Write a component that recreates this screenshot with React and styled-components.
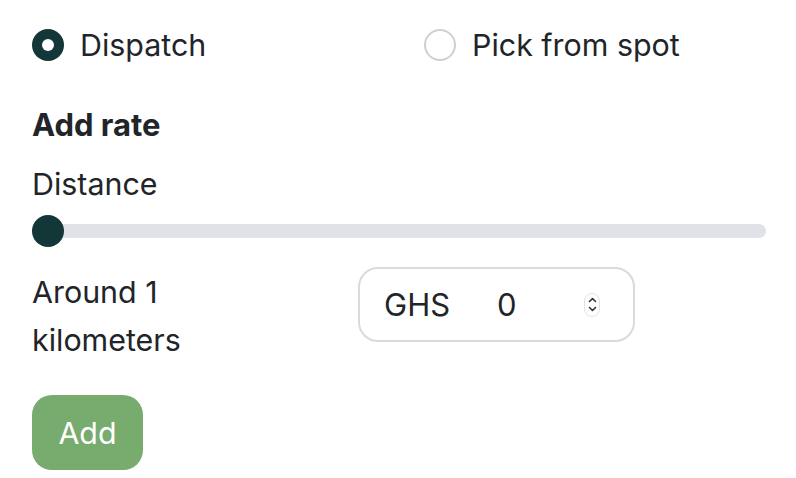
import React from "react";
import styled, { createGlobalStyle } from "styled-components";

const Global = createGlobalStyle`
  html, body { margin: 0; padding: 0; background: #fff; }
  body { font-family: Inter, "Liberation Sans", sans-serif; color: #212529; }
  * { box-sizing: border-box; }
`;

const Page = styled.div`
  padding: 21px 30px 0 32px;
  display: flex;
  flex-direction: column;
`;

const RadioRow = styled.div`
  display: grid;
  grid-template-columns: 392px 1fr;
  height: 48px;
  align-items: center;
`;

const RadioOption = styled.label`
  display: flex;
  align-items: center;
  gap: 16px;
  font-size: 30.4px;
  cursor: pointer;
`;

const RadioDot = styled.span`
  width: 32px;
  height: 32px;
  border-radius: 50%;
  flex: none;
  display: flex;
  align-items: center;
  justify-content: center;
  background: ${(p) => (p.$checked ? "#133638" : "#fff")};
  border: ${(p) => (p.$checked ? "none" : "2px solid #cfcfcf")};
  &::after {
    content: "";
    display: ${(p) => (p.$checked ? "block" : "none")};
    width: 12px;
    height: 12px;
    border-radius: 50%;
    background: #fff;
  }
`;

const Title = styled.div`
  margin-top: 36px;
  font-size: 31px;
  font-weight: 700;
  line-height: 40px;
`;

const Label = styled.div`
  margin-top: 19px;
  font-size: 30.4px;
  line-height: 40px;
`;

const Slider = styled.div`
  margin-top: 11px;
  position: relative;
  height: 32px;
  width: 734px;
  display: flex;
  align-items: center;
`;

const Track = styled.div`
  width: 100%;
  height: 14px;
  border-radius: 7px;
  background: #dfe2e6;
`;

const Thumb = styled.div`
  position: absolute;
  left: 0;
  top: 0;
  width: 32px;
  height: 32px;
  border-radius: 50%;
  background: #133638;
`;

const RateRow = styled.div`
  margin-top: 21px;
  display: grid;
  grid-template-columns: 326px 277px;
  align-items: start;
`;

const RateText = styled.div`
  font-size: 30.4px;
  line-height: 48px;
  max-width: 200px;
`;

const InputBox = styled.div`
  margin-top: -1px;
  height: 75px;
  border: 2px solid #dadada;
  border-radius: 20px;
  display: flex;
  align-items: center;
  padding: 0 0 0 24px;
  font-size: 31px;
`;

const Currency = styled.span`
  width: 113px;
`;

const Value = styled.span`
  flex: 1;
`;

const Spinner = styled.span`
  width: 16px;
  height: 24px;
  border: 1px solid #e2e2e2;
  border-radius: 8px;
  margin-right: 33px;
  display: flex;
  flex-direction: column;
  align-items: center;
  justify-content: space-around;
  padding: 2px 0;
`;

const AddButton = styled.button`
  margin-top: 31px;
  width: 111px;
  height: 75px;
  border: none;
  border-radius: 20px;
  background: #78ab6e;
  color: #fff;
  font-family: inherit;
  font-size: 30.4px;
  cursor: pointer;
`;

const Chevron = ({ up }) => (
  <svg width="9" height="6" viewBox="0 0 9 6">
    <path
      d={up ? "M1.5 4.5 L4.5 1.5 L7.5 4.5" : "M1.5 1.5 L4.5 4.5 L7.5 1.5"}
      fill="none"
      stroke="#333"
      strokeWidth="1.6"
      strokeLinecap="round"
      strokeLinejoin="round"
    />
  </svg>
);

export default function App() {
  return (
    <>
      <Global />
      <Page>
        <RadioRow>
          <RadioOption>
            <RadioDot $checked />
            Dispatch
          </RadioOption>
          <RadioOption>
            <RadioDot />
            Pick from spot
          </RadioOption>
        </RadioRow>
        <Title>Add rate</Title>
        <Label>Distance</Label>
        <Slider>
          <Track />
          <Thumb />
        </Slider>
        <RateRow>
          <RateText>Around 1 kilometers</RateText>
          <InputBox>
            <Currency>GHS</Currency>
            <Value>0</Value>
            <Spinner>
              <Chevron up />
              <Chevron />
            </Spinner>
          </InputBox>
        </RateRow>
        <div>
          <AddButton>Add</AddButton>
        </div>
      </Page>
    </>
  );
}
